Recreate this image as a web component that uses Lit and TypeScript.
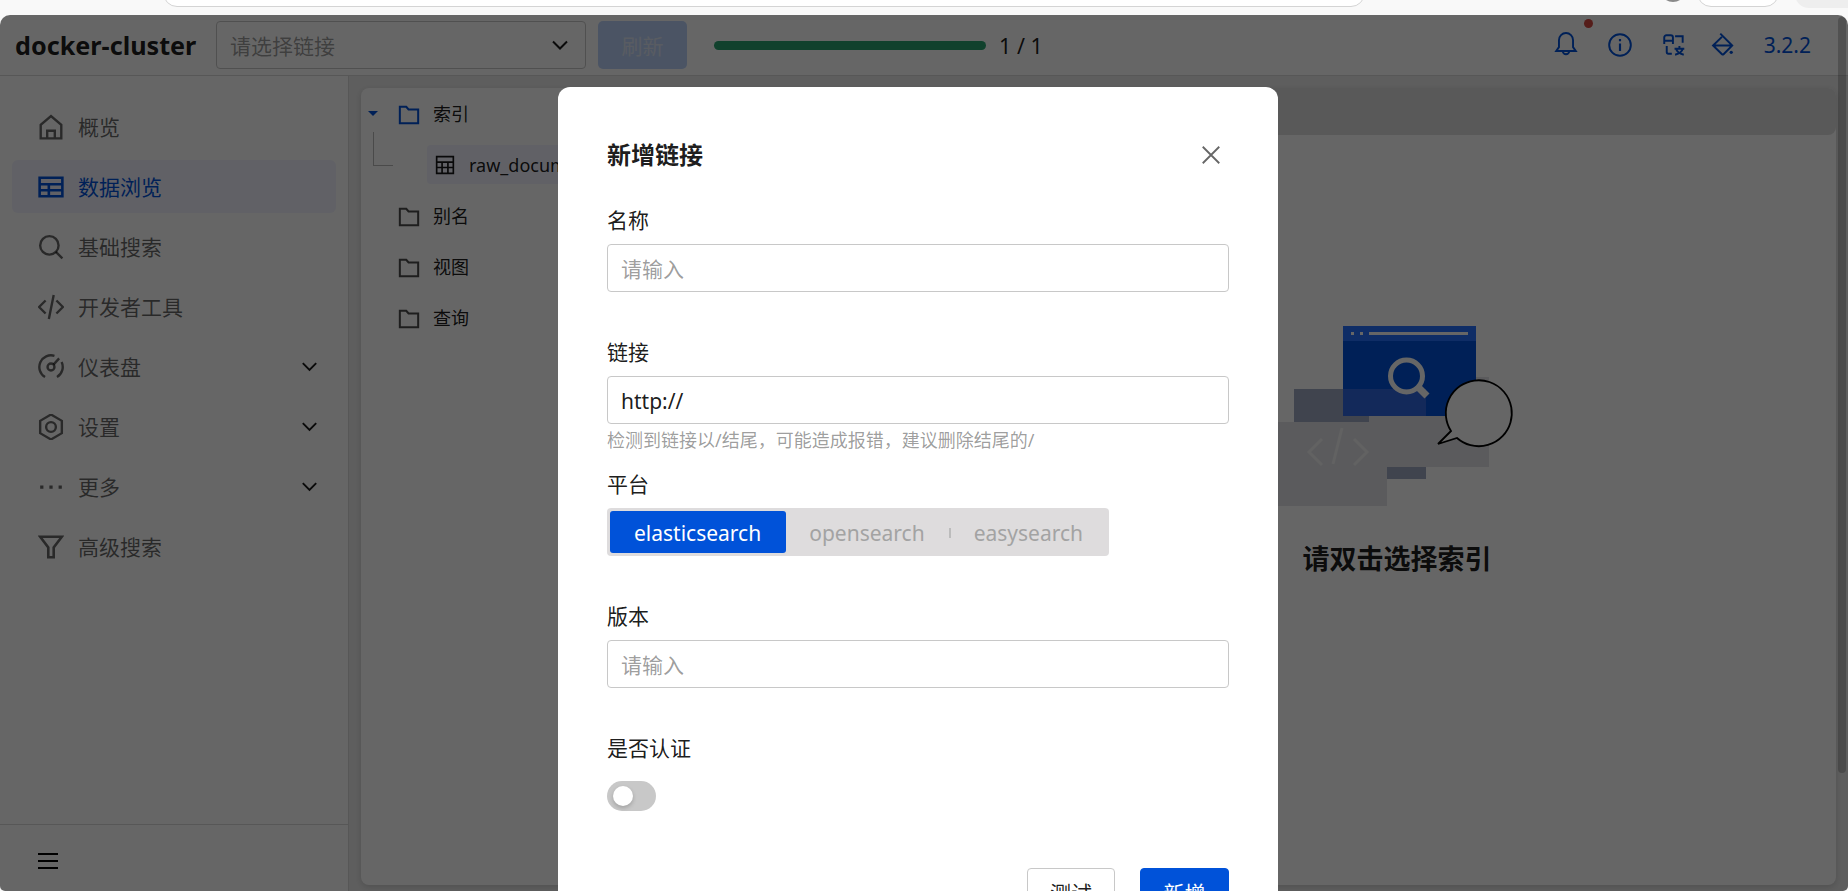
import { LitElement, html, css, svg } from 'lit';
import { customElement } from 'lit/decorators.js';

const icon = (body: unknown, size = 26) => html`<svg class="icon" width=${size} height=${size} viewBox="0 0 24 24" fill="none" stroke="currentColor" stroke-width="2.200">${body}</svg>`;

const chevron = svg`<path d="M5 8.500l7 7 7-7" stroke-width="2"/>`;
const folder = svg`<path d="M2 3h7l2.500 3H22v15H2z" stroke-width="2.200"/>`;

const navItems = [
  { label: '概览', body: svg`<path d="M2.500 22.500V10L12 2l9.500 8v12.500zM8.500 22.500v-7h7v7z"/>` },
  { label: '数据浏览', active: true, body: svg`<path d="M1.500 3.500h21v17h-21zM1.500 9.500h21M1.500 15h21M10 9.500v11" stroke-width="2.400"/>` },
  { label: '基础搜索', body: svg`<circle cx="10.500" cy="10.500" r="8.500"/><path d="M16.500 16.500l6 6"/>` },
  { label: '开发者工具', body: svg`<path d="M7 6L1 12l6 6M17 6l6 6-6 6M14.500 1L10 23"/>` },
  { label: '仪表盘', open: true, body: svg`<path d="M6.500 21.300A10.800 10.800 0 0 1 15.200 1.700M21.800 7.400A10.800 10.800 0 0 1 17.500 21.300"/><circle cx="12" cy="12" r="3.200"/><path d="M14.300 9.800L19.500 4"/>` },
  { label: '设置', open: true, body: svg`<path d="M12 .5L22 6.300V17.700L12 23.500 2 17.700V6.300z"/><circle cx="12" cy="12" r="4.500"/>` },
  { label: '更多', open: true, body: svg`<path d="M2 12h3M10.500 12h3M19 12h3" stroke-width="3"/>` },
  { label: '高级搜索', body: svg`<path d="M2 2.500h20l-7.500 10v9h-5v-9z" stroke-width="2.400"/>` },
];

const treeFolders = ['别名', '视图', '查询'];

// full width commas, written as escapes so they stay what they are
const urlHint = '检测到链接以/结尾\uFF0C可能造成报错\uFF0C建议删除结尾的/';

@customElement('app-root')
export class AppRoot extends LitElement {

  static styles = css`
    :host {
      display: block;
      font-family: 'Noto Sans', 'Noto Sans CJK SC', sans-serif;
      color: rgba(0, 0, 0, 0.9);
    }

    .page {
      display: flex;
      flex-direction: column;
      width: 1848px;
      height: 891px;
      overflow: hidden;
      background: #f9f9f9;
    }

    .chrome {
      flex: none;
      display: flex;
      height: 15px;
      overflow: hidden;
    }

    .omnibox {
      width: 1202px;
      height: 30px;
      margin: -23px 0 0 163px;
      box-sizing: border-box;
      background: #fff;
      border: 1px solid #d4d4d4;
      border-radius: 14px;
    }

    .chrome-dot {
      width: 26px;
      height: 26px;
      margin: -24px 0 0 295px;
      border-radius: 50%;
      background: #8a8a8a;
    }

    .chrome-pill {
      width: 82px;
      height: 30px;
      margin: -23px 0 0 11px;
      box-sizing: border-box;
      border: 1px solid #d4d4d4;
      border-radius: 14px;
      background: #fff;
    }

    .chrome-tail {
      flex: 1;
      height: 30px;
      margin: -22px 0 0 16px;
      border-radius: 14px 0 0 14px;
      background: #eeeeee;
    }

    .window {
      position: relative;
      flex: 1;
      display: flex;
      flex-direction: column;
      min-height: 0;
      overflow: hidden;
      border-radius: 10px 10px 5px 5px;
      background: #fff;
    }

    .header {
      flex: none;
      display: flex;
      align-items: center;
      height: 60px;
      padding: 0 37px 0 15px;
      border-bottom: 1px solid #dadada;
    }

    .brand {
      width: 201px;
      font-size: 25.200px;
      font-weight: 700;
      white-space: nowrap;
    }

    .select {
      display: flex;
      align-items: center;
      justify-content: space-between;
      box-sizing: border-box;
      width: 370px;
      height: 48px;
      padding: 0 13px 0 13px;
      border: 1px solid #c8c8c8;
      border-radius: 4px;
      font-size: 21px;
      color: rgba(0, 0, 0, 0.4);
    }

    .select .icon {
      color: rgba(0, 0, 0, 0.9);
    }

    .refresh {
      display: flex;
      align-items: center;
      justify-content: center;
      width: 89px;
      height: 48px;
      margin-left: 12px;
      border-radius: 5px;
      background: #bbd3fb;
      color: #dfe6f5;
      font-size: 21px;
    }

    .progress {
      width: 272px;
      height: 9px;
      margin-left: 27px;
      border-radius: 5px;
      background: #2ba471;
    }

    .count {
      margin-left: 13px;
      font-size: 21.500px;
    }

    .tools {
      display: flex;
      align-items: center;
      gap: 28px;
      margin-left: auto;
      color: #0052d9;
    }

    .tool-bell {
      position: relative;
      display: flex;
    }

    .tool-bell::after {
      content: '';
      position: absolute;
      top: -13px;
      left: 31px;
      width: 9px;
      height: 9px;
      border-radius: 50%;
      background: #d54941;
    }

    .tool-fill {
      display: flex;
      margin-left: -5px;
    }

    .version {
      font-size: 21px;
    }

    .body {
      flex: 1;
      display: flex;
      min-height: 0;
    }

    .sidebar {
      flex: none;
      display: flex;
      flex-direction: column;
      box-sizing: border-box;
      width: 349px;
      border-right: 1px solid #dadada;
    }

    .nav {
      flex: 1;
      display: flex;
      flex-direction: column;
      gap: 7px;
      padding: 24px 12px 0;
    }

    .nav-item {
      display: flex;
      align-items: center;
      gap: 14px;
      height: 53px;
      padding: 0 15px 0 26px;
      border-radius: 6px;
      font-size: 21px;
      color: rgba(0, 0, 0, 0.6);
    }

    .nav-item.active {
      background: #f2f3ff;
      color: #0052d9;
    }

    .nav-item span {
      flex: 1;
      padding-bottom: 2px;
    }

    .chev {
      display: flex;
      color: rgba(0, 0, 0, 0.9);
    }

    .side-foot {
      flex: none;
      display: flex;
      align-items: center;
      box-sizing: border-box;
      height: 67px;
      padding: 6px 0 0 38px;
      border-top: 1px solid #dadada;
    }

    .burger {
      width: 20px;
      height: 16px;
      background: linear-gradient(#000 0 2px, transparent 2px 7px, #000 7px 9px, transparent 9px 14px, #000 14px 16px);
    }

    .main {
      flex: 1;
      display: flex;
      min-width: 0;
      padding: 12px 12px 6px 12px;
      background: #ebebeb;
    }

    .card {
      flex: 1;
      display: flex;
      min-width: 0;
      border-radius: 8px;
      background: #fff;
      box-shadow: 0 2px 6px rgba(0, 0, 0, 0.15);
      overflow: hidden;
    }

    .tree {
      flex: none;
      width: 597px;
      box-sizing: border-box;
      padding-left: 7px;
    }

    .tree-row {
      position: relative;
      display: flex;
      align-items: center;
      height: 51px;
      font-size: 18px;
    }

    .tree-row > span {
      padding-bottom: 1px;
    }

    .caret {
      flex: none;
      width: 30px;
      color: #0052d9;
    }

    .caret-mark {
      width: 0;
      height: 0;
      border-left: 5px solid transparent;
      border-right: 5px solid transparent;
      border-top: 5px solid #0052d9;
    }

    .tree-folder {
      display: flex;
      margin: 3px 13px 0 0;
      color: rgba(0, 0, 0, 0.7);
    }

    .tree-folder.open {
      color: #0052d9;
    }

    .leaf {
      flex: 1;
      display: flex;
      align-items: center;
      gap: 14px;
      height: 39px;
      margin-left: 59px;
      padding-left: 8px;
      border-radius: 4px;
      background: #f2f3ff;
    }

    .connector {
      position: absolute;
      top: -7px;
      left: 5px;
      width: 19px;
      height: 33px;
      border-left: 1px solid #b8b8b8;
      border-bottom: 1px solid #b8b8b8;
    }

    .pane {
      flex: 1;
      display: flex;
      flex-direction: column;
      align-items: center;
    }

    .pane-bar {
      flex: none;
      align-self: stretch;
      height: 47px;
      border-radius: 0 0 8px 8px;
      background: #dedede;
    }

    .art {
      margin-top: 185px;
    }

    .empty-text {
      margin-top: 31px;
      font-size: 27px;
      line-height: 36px;
      font-weight: 700;
    }

    .mask {
      position: absolute;
      inset: 0;
      display: flex;
      justify-content: center;
      align-items: flex-start;
      box-sizing: border-box;
      padding: 72px 12px 0 0;
      background: rgba(0, 0, 0, 0.6);
    }

    .thumb {
      position: absolute;
      top: 2px;
      right: 2px;
      width: 8px;
      height: 756px;
      border-radius: 4px;
      background: rgba(0, 0, 0, 0.2);
    }

    .dialog {
      flex: none;
      width: 720px;
      box-sizing: border-box;
      padding: 50px 49px 48px;
      border-radius: 12px;
      background: #fff;
    }

    .dialog-head {
      display: flex;
      align-items: center;
      justify-content: space-between;
      height: 36px;
      margin-bottom: 33px;
      padding-right: 7px;
      font-size: 24px;
      font-weight: 700;
    }

    .dialog-head span {
      padding-bottom: 4px;
    }

    .close {
      display: flex;
      color: #666;
    }

    .field {
      height: 132px;
    }

    .label {
      height: 30px;
      margin-bottom: 8px;
      font-size: 21px;
      line-height: 28px;
    }

    .input {
      display: flex;
      align-items: center;
      box-sizing: border-box;
      height: 48px;
      padding: 2px 13px 0;
      border: 1px solid #c8c8c8;
      border-radius: 4px;
      font-size: 21px;
    }

    .input.empty {
      padding-top: 0;
      color: rgba(0, 0, 0, 0.4);
    }

    .hint {
      margin-top: 4px;
      font-size: 18px;
      line-height: 24px;
      color: rgba(0, 0, 0, 0.4);
    }

    .segments {
      display: flex;
      align-items: center;
      box-sizing: border-box;
      width: 502px;
      height: 48px;
      padding: 0 3px;
      border-radius: 4px;
      background: #dedcdd;
      font-size: 21px;
      color: #a3a3a3;
    }

    .segment {
      padding: 2px 24px 0;
    }

    .segment.open-search {
      padding: 2px 25px 0 23px;
    }

    .segment.on {
      display: flex;
      align-items: center;
      box-sizing: border-box;
      height: 42px;
      padding-right: 25px;
      border-radius: 3px;
      background: #0052d9;
      color: #fff;
    }

    .segment-rule {
      flex: none;
      width: 2px;
      height: 10px;
      margin: 2px -1px 0;
      background: #bcbcbc;
    }

    .switch {
      display: flex;
      align-items: center;
      box-sizing: border-box;
      width: 49px;
      height: 30px;
      margin-top: 17px;
      padding-left: 6px;
      border-radius: 15px;
      background: #c8c8c8;
    }

    .knob {
      width: 20px;
      height: 20px;
      border-radius: 50%;
      background: #fff;
      box-shadow: 0 2px 4px rgba(0, 0, 0, 0.2);
    }

    .actions {
      display: flex;
      justify-content: flex-end;
      gap: 25px;
      margin-top: 2px;
    }

    .btn {
      display: flex;
      align-items: center;
      justify-content: center;
      box-sizing: border-box;
      width: 88px;
      height: 48px;
      border: 1px solid #c8c8c8;
      border-radius: 4px;
      font-size: 21px;
    }

    .btn.primary {
      width: 89px;
      border-color: #0052d9;
      background: #0052d9;
      color: #fff;
    }
  `;

  renderArt() {
    // drawn in page coordinates, viewBox starts where the svg sits on the page
    return html`<svg class="art" width="294" height="190" viewBox="1250 320 294 190">
      <rect x="1476" y="377" width="13" height="45" fill="#e3e4e8"/>
      <rect x="1343" y="326" width="133" height="90" fill="#0052d9"/>
      <rect x="1343" y="326" width="133" height="15" fill="#2670ff"/>
      <rect x="1351" y="332" width="3" height="3" fill="#fff"/>
      <rect x="1360" y="332" width="3" height="3" fill="#fff"/>
      <rect x="1369" y="332" width="99" height="3" fill="#fff"/>
      <rect x="1294" y="389" width="75" height="33" fill="#a0aac3"/>
      <rect x="1343" y="389" width="83" height="27" fill="#3066e1"/>
      <circle cx="1406.500" cy="376" r="16" fill="none" stroke="#fff" stroke-width="5"/>
      <path d="M1418 387l9 9" stroke="#fff" stroke-width="7"/>
      <rect x="1250" y="422" width="137" height="84" fill="#e3e4e8"/>
      <rect x="1369" y="416" width="120" height="51" fill="#e3e4e8"/>
      <rect x="1387" y="467" width="39" height="12" fill="#a0aac3"/>
      <path d="M1322 439l-13 13 13 13M1354 439l13 13-13 13M1342 428l-9 36" fill="none" stroke="#fff" stroke-opacity="0.6" stroke-width="3"/>
      <path d="M1451 431A33 33 0 1 1 1457 438L1438 444z" fill="#fff" stroke="#000" stroke-width="1.800"/>
    </svg>`;
  }

  render() {
    return html`
      <div class="page">
        <div class="chrome">
          <div class="omnibox"></div>
          <div class="chrome-dot"></div>
          <div class="chrome-pill"></div>
          <div class="chrome-tail"></div>
        </div>
        <div class="window">
          <div class="header">
            <div class="brand">docker-cluster</div>
            <div class="select">
              <span>请选择链接</span>
              ${icon(chevron, 24)}
            </div>
            <div class="refresh">刷新</div>
            <div class="progress"></div>
            <div class="count">1 / 1</div>
            <div class="tools">
              <div class="tool-bell">
                ${icon(svg`<path d="M3 17.500h18l-2.500-3.500V7.500a6.500 6.500 0 0 0-13 0V14zM9 17.500a3 3 0 0 0 6 0" stroke-width="1.800"/>`)}
              </div>
              ${icon(svg`<circle cx="12" cy="12" r="10" stroke-width="1.800"/><path d="M12 10.500V17.500M12 6.500v2" stroke-width="2"/>`)}
              ${icon(svg`<path d="M3 11V5a2 2 0 0 1 2-2h4a2 2 0 0 1 2 2v6M3 8h8M13 4h7v6M5.300 13v5.500a1.500 1.500 0 0 0 1.500 1.500H10M12.500 15.500h9M17 13v2.500M14 15.500c.5 2.500 3 4.500 7 5.500M20 15.500c-.5 2.500-3 4.500-7 5.500" stroke-width="1.800"/>`)}
              <div class="tool-fill">
                ${icon(svg`<path d="M9.500 1.500L20.500 12.500 12.500 20.500a1 1 0 0 1-1.400 0L2.800 12.500 11 4.500M2.800 12.500H20.500" stroke-width="1.800"/><circle cx="19.600" cy="18.700" r="1.500" fill="currentColor" stroke="none"/>`)}
              </div>
              <div class="version">3.2.2</div>
            </div>
          </div>
          <div class="body">
            <div class="sidebar">
              <div class="nav">
                ${navItems.map(item => html`
                  <div class="nav-item ${item.active ? 'active' : ''}">
                    ${icon(item.body)}
                    <span>${item.label}</span>
                    ${item.open ? html`<div class="chev">${icon(chevron, 23)}</div>` : ''}
                  </div>
                `)}
              </div>
              <div class="side-foot"><div class="burger"></div></div>
            </div>
            <div class="main">
              <div class="card">
                <div class="tree">
                  <div class="tree-row">
                    <div class="caret"><div class="caret-mark"></div></div>
                    <div class="tree-folder open">${icon(folder, 22)}</div>
                    <span>索引</span>
                  </div>
                  <div class="tree-row">
                    <div class="connector"></div>
                    <div class="leaf">
                      ${icon(svg`<path d="M2 2h20v20H2zM2 8.500h20M2 15h20M8.500 8.500V22M15.500 8.500V22" stroke-width="2"/>`, 20)}
                      <span>raw_documents</span>
                    </div>
                  </div>
                  ${treeFolders.map(name => html`
                    <div class="tree-row">
                      <div class="caret"></div>
                      <div class="tree-folder">${icon(folder, 22)}</div>
                      <span>${name}</span>
                    </div>
                  `)}
                </div>
                <div class="pane">
                  <div class="pane-bar"></div>
                  ${this.renderArt()}
                  <div class="empty-text">请双击选择索引</div>
                </div>
              </div>
            </div>
          </div>
          <div class="mask">
            <div class="thumb"></div>
            <div class="dialog">
              <div class="dialog-head">
                <span>新增链接</span>
                <div class="close">${icon(svg`<path d="M3 3l18 18M21 3L3 21" stroke-width="2"/>`, 22)}</div>
              </div>
              <div class="field">
                <div class="label">名称</div>
                <div class="input empty">请输入</div>
              </div>
              <div class="field">
                <div class="label">链接</div>
                <div class="input">http://</div>
                <div class="hint">${urlHint}</div>
              </div>
              <div class="field">
                <div class="label">平台</div>
                <div class="segments">
                  <div class="segment on">elasticsearch</div>
                  <div class="segment open-search">opensearch</div>
                  <div class="segment-rule"></div>
                  <div class="segment">easysearch</div>
                </div>
              </div>
              <div class="field">
                <div class="label">版本</div>
                <div class="input empty">请输入</div>
              </div>
              <div class="field">
                <div class="label">是否认证</div>
                <div class="switch"><div class="knob"></div></div>
              </div>
              <div class="actions">
                <div class="btn">测试</div>
                <div class="btn primary">新增</div>
              </div>
            </div>
          </div>
        </div>
      </div>
    `;
  }
}
